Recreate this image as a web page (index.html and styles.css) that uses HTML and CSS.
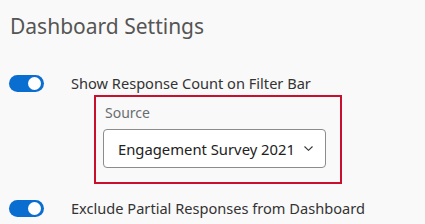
FILE: index.html
```html
<!DOCTYPE html>
<html lang="en">
<head>
  <meta charset="UTF-8" />
  <title>Dashboard Settings</title>
  <link rel="stylesheet" href="styles.css">
</head>
<body>
  <h1 class="title">Dashboard Settings</h1>

  <div class="setting">
    <span class="toggle on"><span class="knob"></span></span>
    <span class="setting-label">Show Response Count on Filter Bar</span>
  </div>

  <div class="source-box">
    <div class="source-label">Source</div>
    <div class="select">
      <span class="select-text">Engagement Survey 2021</span>
      <svg class="chevron" width="9" height="5" viewBox="0 0 9 5">
        <path d="M0.5 0.5 L4.5 4.3 L8.5 0.5" fill="none" stroke="#333" stroke-width="1.1"/>
      </svg>
    </div>
  </div>

  <div class="setting last">
    <span class="toggle on"><span class="knob"></span></span>
    <span class="setting-label">Exclude Partial Responses from Dashboard</span>
  </div>
</body>
</html>
```

FILE: styles.css
```css
body {
  margin: 0;
  background: #f9f9f9;
  font-family: "Noto Sans", "Open Sans", sans-serif;
  color: #333;
  width: 425px;
  height: 224px;
  overflow: hidden;
}
.title {
  margin: 0;
  padding: 12px 0 0 10px;
  font-size: 21px;
  font-weight: 400;
  color: #555;
  line-height: 28px;
}
.setting {
  display: flex;
  align-items: center;
  height: 21px;
  margin-top: 33px;
  padding-left: 9px;
}
.setting.last {
  margin-top: 14px;
}
.toggle {
  position: relative;
  width: 35px;
  height: 17px;
  border-radius: 9px;
  background: #ccc;
  flex: none;
}
.toggle.on {
  background: #0a6ed1;
}
.knob {
  position: absolute;
  top: 2px;
  right: 3px;
  width: 13px;
  height: 13px;
  border-radius: 50%;
  background: #fff;
}
.setting-label {
  margin-left: 27px;
  font-size: 14.6px;
  line-height: 21px;
  color: #333;
  white-space: nowrap;
}
.source-box {
  margin: 1px 0 0 94px;
  width: 244px;
  height: 85px;
  border: 2px solid #c8102e;
}
.source-label {
  margin: 7px 0 0 9px;
  font-size: 14px;
  color: #6a6d70;
  line-height: 18px;
}
.select {
  display: flex;
  align-items: center;
  justify-content: space-between;
  margin: 7px 0 0 7px;
  width: 223px;
  height: 39px;
  box-sizing: border-box;
  padding: 0 12px 0 14px;
  background: #fff;
  border: 1px solid #8c8c8c;
  border-radius: 4px;
}
.select-text {
  font-size: 14.8px;
  color: #222;
  white-space: nowrap;
}
.chevron {
  display: block;
}
```
